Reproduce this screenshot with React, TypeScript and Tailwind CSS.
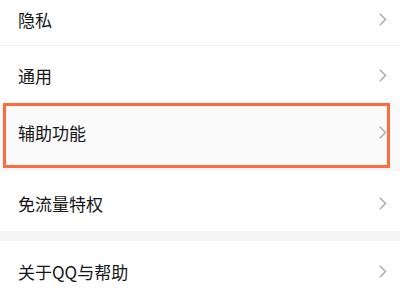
import React from "react";

const Chevron = () => (
  <svg width="8" height="13" viewBox="0 0 8 13" fill="none" className="shrink-0">
    <path d="M1.2 1.2 L6.6 6.5 L1.2 11.8" stroke="#adadad" strokeWidth="1.6" strokeLinecap="round" strokeLinejoin="round" />
  </svg>
);

const Row = ({ label, className = "" }: { label: string; className?: string }) => (
  <div className={`flex items-center justify-between pl-[18px] pr-[13px] ${className}`}>
    <span className="text-[17px] leading-none text-[#161616]">{label}</span>
    <Chevron />
  </div>
);

export default function App() {
  return (
    <div
      className="w-[400px] h-[291px] overflow-hidden bg-white flex flex-col"
      style={{ fontFamily: '"Noto Sans CJK SC", "Noto Sans", sans-serif' }}
    >
      <Row label="隐私" className="h-[46px] pb-[6px] border-b border-[#f1f1f1]" />
      <Row label="通用" className="h-[57px] pt-[1px]" />
      <div className="relative h-[65px] bg-[#fafafa]">
        <Row label="辅助功能" className="h-full pb-[6px]" />
        <div className="absolute left-[3px] top-0 w-[387px] h-[65px] border-[3px] border-[#ff6b3d] pointer-events-none" />
      </div>
      <Row label="免流量特权" className="h-[63px] pt-[4px] border-t-[3px] border-[#f6f6f6]" />
      <div className="h-[10px] bg-[#f5f5f7]" />
      <Row label="关于QQ与帮助" className="h-[49px] pt-[13px] pb-[1px]" />
    </div>
  );
}
